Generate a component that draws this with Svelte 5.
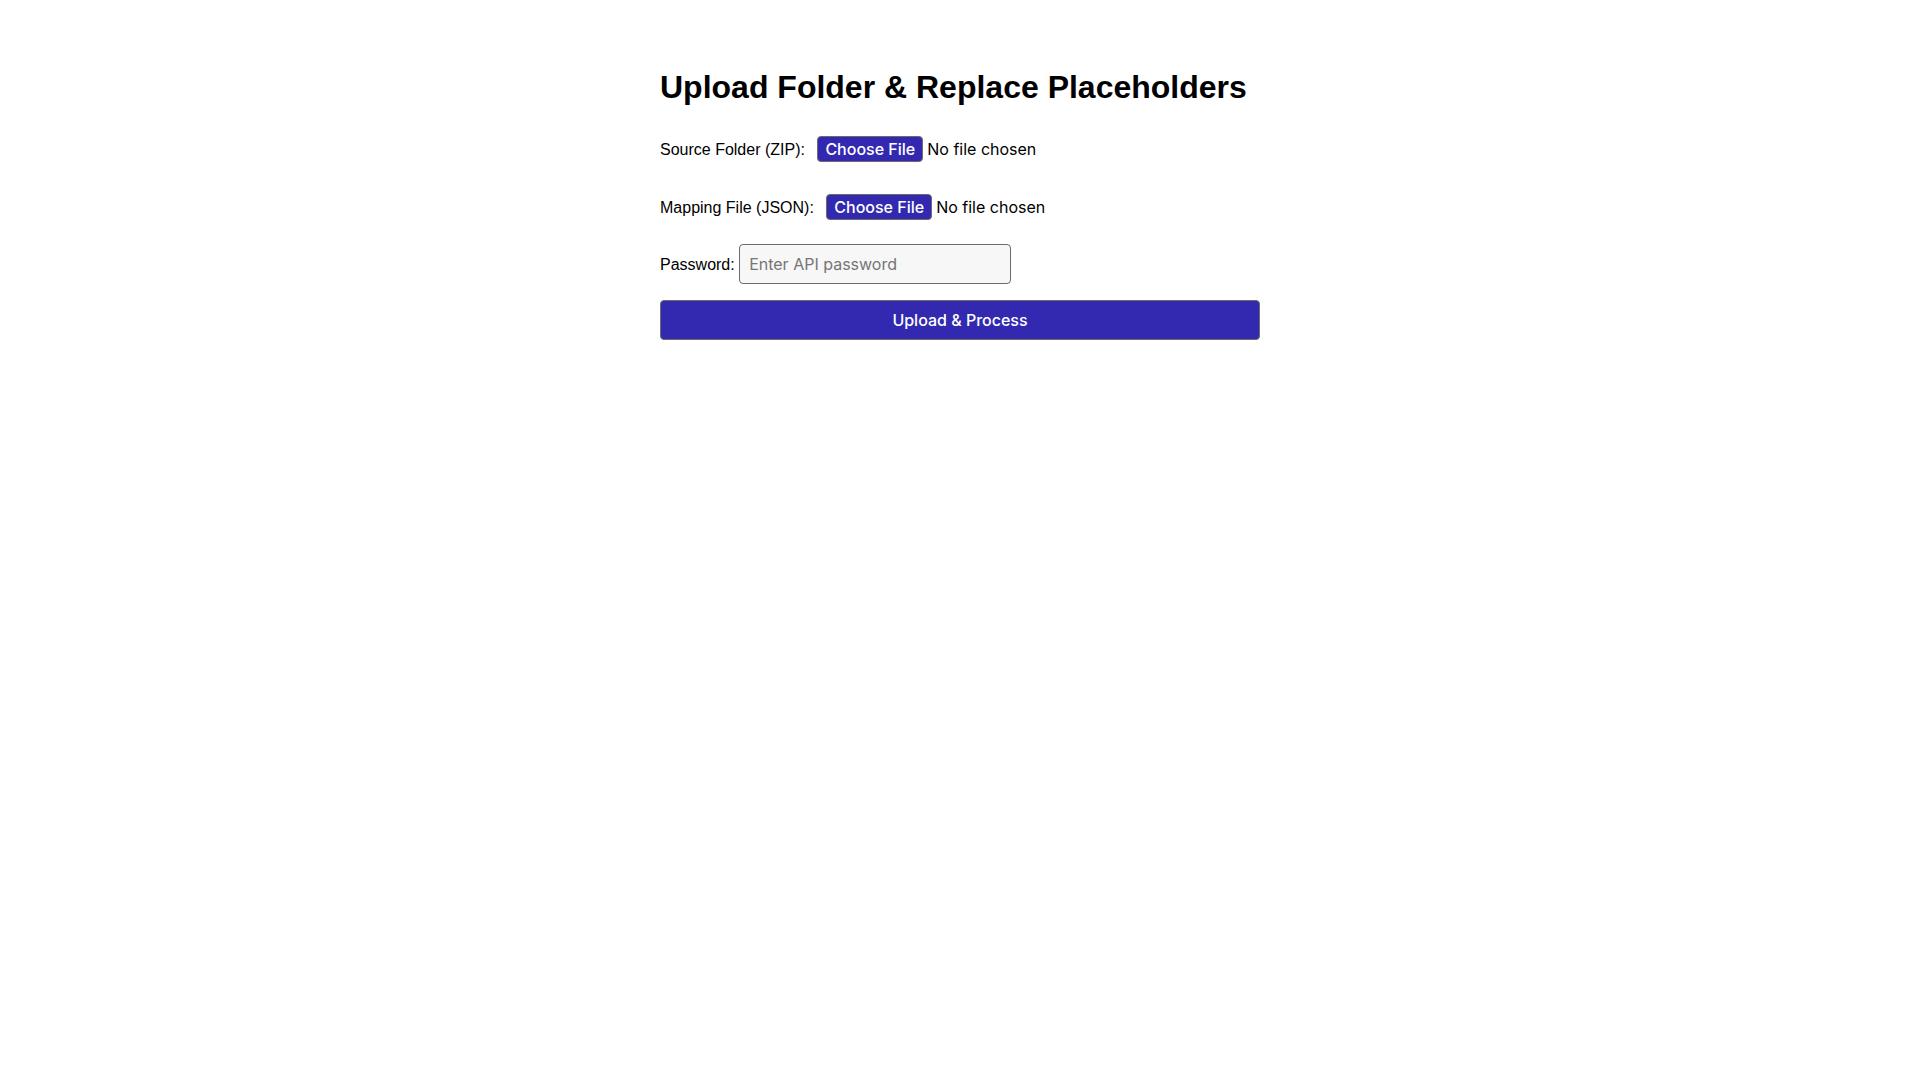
<script lang="ts">
    let sourceFiles = $state<FileList | undefined>();
    let mappingFiles = $state<FileList | undefined>();
    let password = $state("");

    async function handleSubmit(event: SubmitEvent) {
        event.preventDefault();
        if (!sourceFiles?.length || !mappingFiles?.length) return;

        const formData = new FormData();
        formData.append("source", sourceFiles[0]);
        formData.append("mapping", mappingFiles[0]);
        formData.append("password", password);
        await fetch("/api/process", { method: "POST", body: formData });
    }
</script>

<main>
    <h1>Upload Folder &amp; Replace Placeholders</h1>
    <form onsubmit={handleSubmit}>
        <label>
            Source Folder (ZIP):
            <input type="file" accept=".zip" bind:files={sourceFiles} />
        </label>
        <label>
            Mapping File (JSON):
            <input type="file" accept=".json" bind:files={mappingFiles} />
        </label>
        <label>
            Password:
            <input type="password" placeholder="Enter API password" bind:value={password} />
        </label>
        <button type="submit">Upload &amp; Process</button>
    </form>
</main>

<style>
    main {
        max-width: 600px;
        margin: 48px auto;
        padding: 20px;
        font-family: "Liberation Sans", Arial, sans-serif;
    }
    h1 {
        margin: 0 0 22px;
        font-size: 32px;
        line-height: 38px;
    }
    form {
        display: flex;
        flex-direction: column;
        gap: 16px;
    }
    input,
    button {
        box-sizing: border-box;
        font-family: Inter, sans-serif;
        font-size: 16px;
        line-height: 20px;
    }
    input[type="file"] {
        padding: 8px;
    }
    input[type="file"]::file-selector-button {
        padding: 2px 7px;
        border: 1px solid #6b6b6b;
        border-radius: 4px;
        background: #3329b1;
        color: #fff;
        font: inherit;
        font-weight: 500;
    }
    input[type="password"] {
        width: 272px;
        padding: 9px;
        border: 1px solid #6b6b6b;
        border-radius: 4px;
        background: #f7f7f7;
    }
    button {
        padding: 9px;
        border: 1px solid #6b6b6b;
        border-radius: 4px;
        background: #3329b1;
        color: #fff;
        font-weight: 500;
        cursor: pointer;
    }
</style>
